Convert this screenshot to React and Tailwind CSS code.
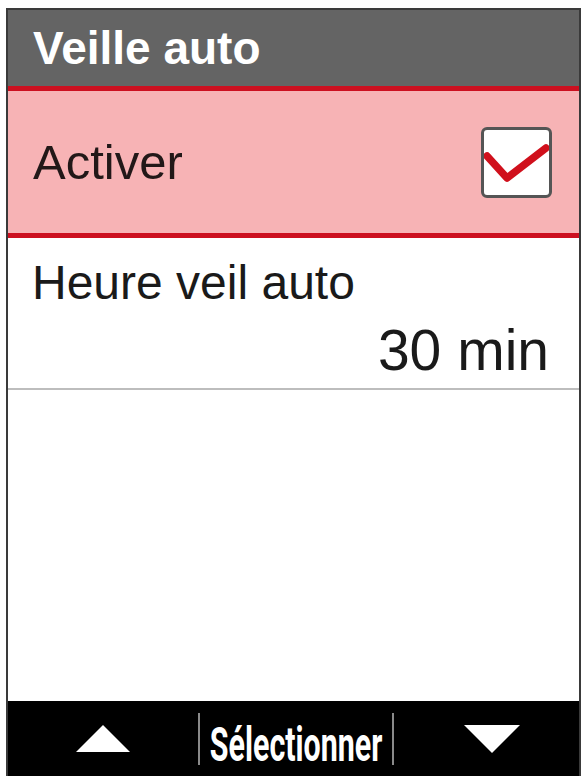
export default function App() {
  return (
    <div className="h-screen bg-white pt-2 px-[6px] overflow-hidden">
      <div
        className="h-[768px] flex flex-col border-2 border-b-0 border-[#3a3a3a]"
        style={{ fontFamily: '"Liberation Sans", Arial, sans-serif' }}
      >
        {/* title bar */}
        <div className="h-[81px] shrink-0 flex items-center pl-[25px] bg-[#646464] border-b-[5px] border-[#cc1020]">
          <span className="text-[46px] leading-none font-bold text-white">Veille auto</span>
        </div>

        {/* selected row */}
        <div className="h-[147px] shrink-0 flex items-center justify-between pl-[25px] pr-[27px] bg-[#f7b3b5] border-b-[5px] border-[#cc1020]">
          <span className="text-[49px] leading-none text-[#221818]">Activer</span>
          <div className="w-[71px] h-[71px] rounded-[6px] border-[3px] border-[#555] bg-white">
            <svg viewBox="0 0 65 65" className="w-full h-full" aria-hidden="true">
              <polyline
                points="3,26 23,48 62,18"
                fill="none"
                stroke="#d0101c"
                strokeWidth="7.5"
                strokeLinejoin="round"
                strokeLinecap="round"
              />
            </svg>
          </div>
        </div>

        {/* value row */}
        <div className="h-[152px] shrink-0 flex flex-col pt-[21px] pl-[24px] pr-[30px] border-b-2 border-[#bdbdbd]">
          <span className="text-[48px] leading-none text-[#1a1a1a]">Heure veil auto</span>
          <span className="mt-[15px] self-end text-[57px] leading-none text-[#1a1a1a]">30 min</span>
        </div>

        <div className="flex-1 bg-white" />

        {/* soft keys */}
        <div className="h-[75px] shrink-0 grid grid-cols-[190px_196px_1fr] bg-black">
          <div className="flex items-center justify-center">
            <svg width="54" height="27" viewBox="0 0 54 27" aria-hidden="true">
              <polygon points="27,0 54,27 0,27" fill="#fff" />
            </svg>
          </div>
          <div className="flex items-center">
            <div className="w-full h-[52px] flex items-start justify-center pt-[7px] border-x-2 border-[#8a8a8a]">
              <span
                className="inline-block scale-x-[0.62] text-[49px] leading-none font-bold text-white whitespace-nowrap"
                style={{ fontFamily: 'Roboto, "Liberation Sans", sans-serif' }}
              >
                Sélectionner
              </span>
            </div>
          </div>
          <div className="flex items-center justify-center pl-[10px]">
            <svg width="56" height="28" viewBox="0 0 56 28" aria-hidden="true">
              <polygon points="0,0 56,0 28,28" fill="#fff" />
            </svg>
          </div>
        </div>
      </div>
    </div>
  );
}
